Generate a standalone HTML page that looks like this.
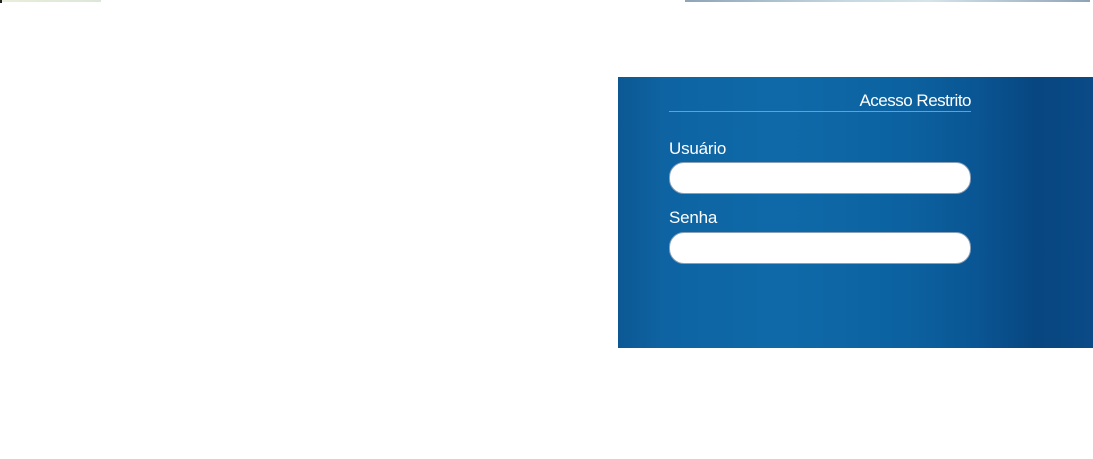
<!DOCTYPE html>
<html><head><meta charset="utf-8"><style>
html,body{margin:0;padding:0;width:1093px;height:459px;background:#fff;overflow:hidden;position:relative;font-family:"Liberation Sans",sans-serif}
.a{position:absolute}
</style></head><body>
<div class="a" style="left:0;top:0;width:2px;height:3px;background:#222"></div>
<div class="a" style="left:2px;top:0;width:99px;height:2px;background:linear-gradient(90deg,#e8eedc,#dde6d8)"></div>
<div class="a" style="left:685px;top:0;width:405px;height:2px;background:linear-gradient(90deg,#8ea4b8,#c6d8e0 40%,#d6e4ea 60%,#8fa3b8)"></div>
<div class="a" style="left:618px;top:77px;width:475px;height:271px;background:linear-gradient(90deg,#0c5894 0%,#0e64a2 10%,#0f69a8 35%,#0c62a0 60%,#0a5694 75%,#074680 88%,#0a4a86 100%)"></div>
<div class="a" style="left:669px;top:111px;width:302px;height:1px;background:#5fa2d6"></div>
<div class="a" style="left:669px;top:91px;width:302px;text-align:right;color:#fff;font-size:17px;line-height:20px;letter-spacing:-0.5px">Acesso Restrito</div>
<div class="a" style="left:669px;top:139px;color:#fff;font-size:17px;line-height:20px;letter-spacing:-0.2px">Usuário</div>
<div class="a" style="left:669px;top:162px;width:300px;height:30px;border-radius:15px;background:#fff;border:1px solid #8aa0b8"></div>
<div class="a" style="left:669px;top:208px;color:#fff;font-size:17px;line-height:20px;letter-spacing:-0.2px">Senha</div>
<div class="a" style="left:669px;top:232px;width:300px;height:30px;border-radius:15px;background:#fff;border:1px solid #8aa0b8"></div>
</body></html>
